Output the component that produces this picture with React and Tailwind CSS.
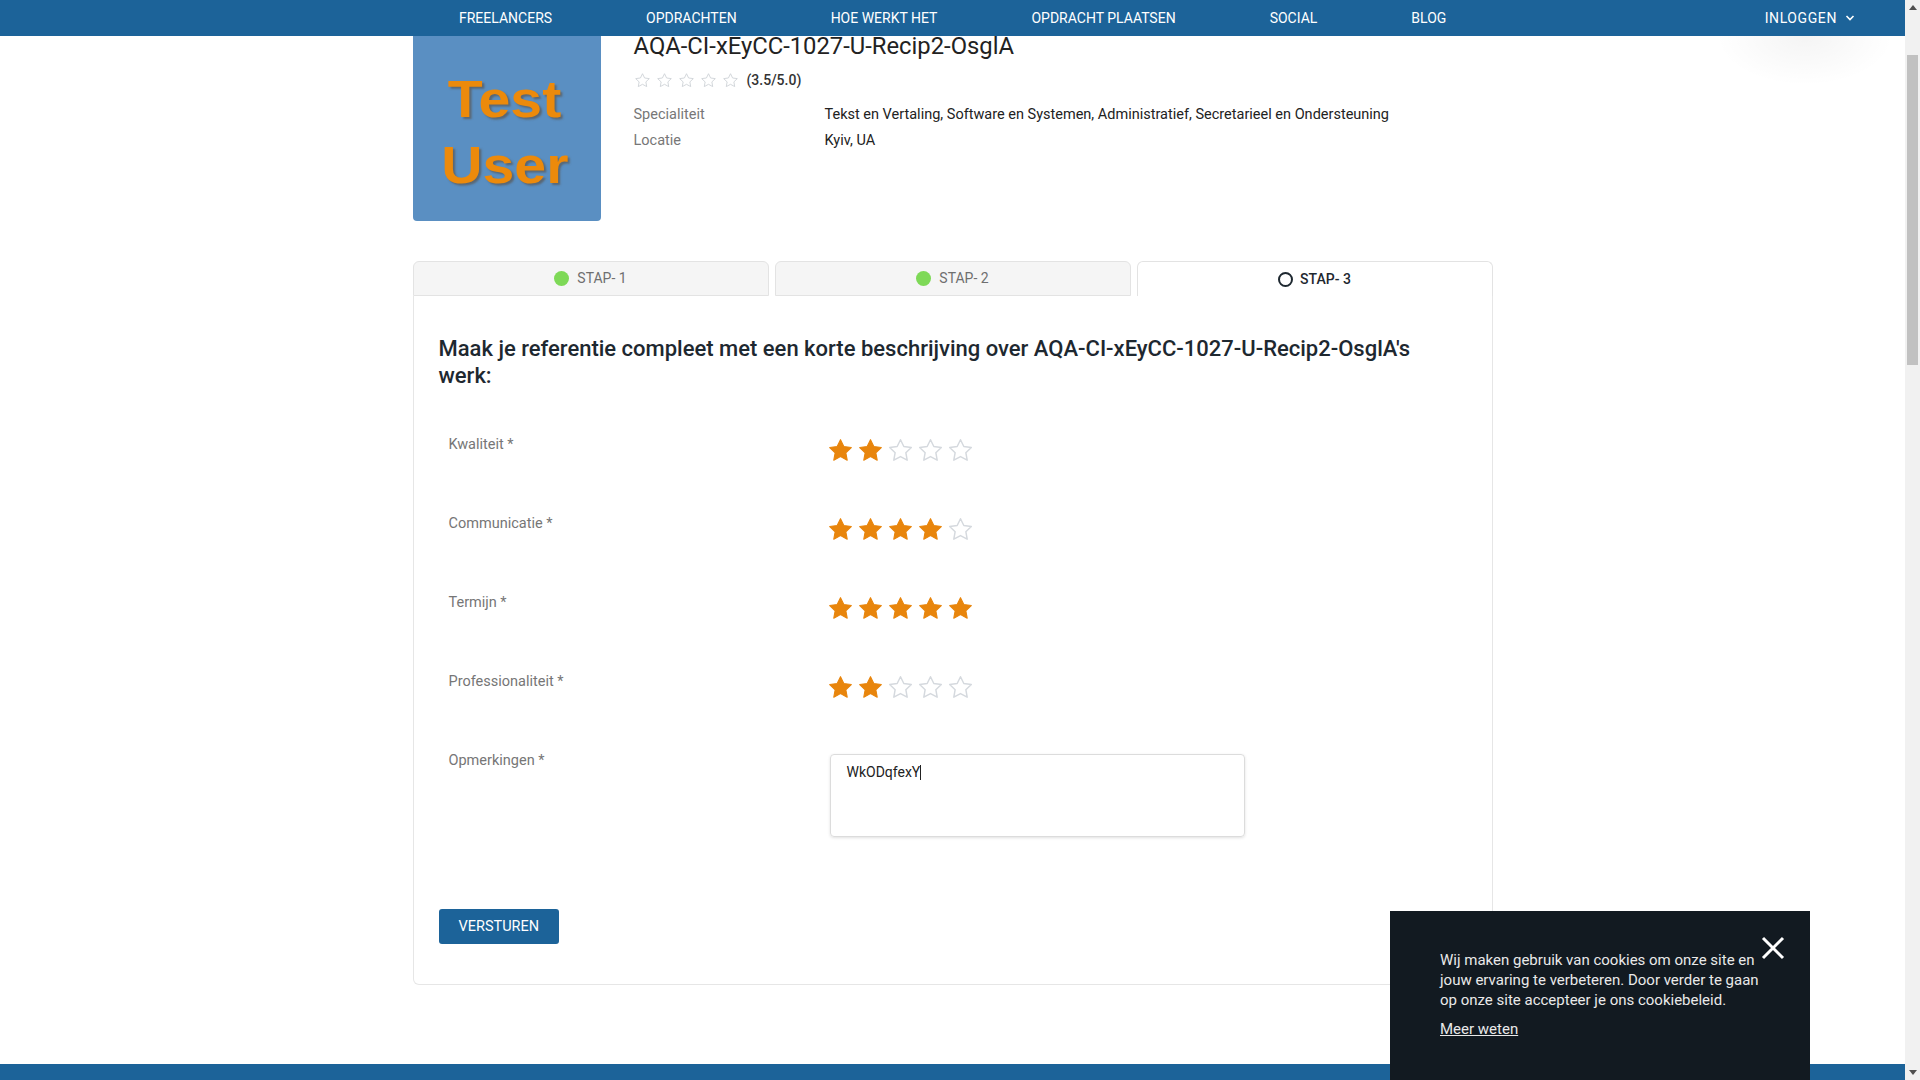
import React from "react";

const STAR_PATH =
  "M12 2.4l2.95 6.05 6.65.9-4.85 4.63 1.2 6.62L12 17.4l-5.95 3.2 1.2-6.62L2.4 9.35l6.65-.9z";

function Star({ filled, size = 22, stroke = "#d5d9de" }) {
  return (
    <svg width={size} height={size} viewBox="0 0 24 24" className="block shrink-0">
      <path
        d={STAR_PATH}
        fill={filled ? "#e8850c" : "none"}
        stroke={filled ? "#e8850c" : stroke}
        strokeWidth={filled ? 1 : 1.3}
        strokeLinejoin="round"
      />
    </svg>
  );
}

function Stars({ value }) {
  return (
    <div className="flex gap-[3px] ml-[-3px]">
      {[1, 2, 3, 4, 5].map((i) => (
        <Star key={i} filled={i <= value} size={27} />
      ))}
    </div>
  );
}

function RatingRow({ label, value }) {
  return (
    <div className="flex h-[79px]">
      <div className="w-[391px] pl-[10px] text-[14.5px] leading-[20px] text-[#767676]">{label}</div>
      <div className="pt-[1.5px]">
        <Stars value={value} />
      </div>
    </div>
  );
}

export default function App() {
  const navItems = ["FREELANCERS", "OPDRACHTEN", "HOE WERKT HET", "OPDRACHT PLAATSEN", "SOCIAL", "BLOG"];
  return (
    <div className="flex w-[1920px] h-[1080px] overflow-hidden bg-white font-['Roboto','Liberation_Sans',sans-serif]">
      <div className="relative w-[1905px] h-full flex flex-col bg-white">
        {/* nav */}
        <nav className="relative z-10 h-[36px] shrink-0 bg-[#1c6399] flex items-center text-white">
          <div className="ml-[459px] flex gap-[94px] text-[14px] leading-none">
            {navItems.map((n) => (
              <span key={n} className="whitespace-nowrap">{n}</span>
            ))}
          </div>
          <div className="ml-auto mr-[50px] flex items-center gap-[8px] text-[14px] tracking-[0.6px] leading-none">
            <span>INLOGGEN</span>
            <svg width="10" height="8" viewBox="0 0 10 8">
              <path d="M1.5 2l3.5 3.5L8.5 2" fill="none" stroke="white" strokeWidth="1.6" />
            </svg>
          </div>
        </nav>
        <div className="absolute top-[36px] left-[1715px] w-[180px] h-[50px] bg-[radial-gradient(ellipse_at_top,rgba(0,0,0,0.045),transparent_70%)]" />

        {/* header */}
        <div className="w-[1080px] mx-auto shrink-0">
          <div className="flex gap-[33px]">
            <div className="w-[188px] h-[185px] rounded-b-[4px] bg-[#5a8fc2] flex flex-col items-center justify-center font-['Liberation_Sans',Arial,sans-serif] font-bold text-[#ec8a0b] text-[52px] leading-[66px] pt-[6px] pr-[3px] [text-shadow:2px_2px_2px_rgba(90,90,90,0.75)]">
              <span className="scale-x-[1.1]">Test</span>
              <span className="scale-x-[1.1]">User</span>
            </div>
            <div className="flex flex-col">
              <div className="mt-[-4px] text-[23.8px] leading-[28px] text-[#222]">AQA-CI-xEyCC-1027-U-Recip2-OsglA</div>
              <div className="mt-[12px] flex items-center h-[16px]">
                <div className="flex gap-[5px]">
                  {[1, 2, 3, 4, 5].map((i) => (
                    <Star key={i} size={17} stroke="#cfd3d8" />
                  ))}
                </div>
                <span className="ml-[8px] text-[14px] font-medium text-[#333]">(3.5/5.0)</span>
              </div>
              <div className="mt-[14px] flex text-[14.5px] leading-[26px]">
                <div className="w-[191px] text-[#777]">Specialiteit</div>
                <div className="text-[#222]">
                  Tekst en Vertaling, Software en Systemen, Administratief, Secretarieel en Ondersteuning
                </div>
              </div>
              <div className="flex text-[14.5px] leading-[26px]">
                <div className="w-[191px] text-[#777]">Locatie</div>
                <div className="text-[#222]">Kyiv, UA</div>
              </div>
            </div>
          </div>

          {/* tabs */}
          <div className="mt-[40px] flex gap-[6px] h-[35px]">
            <div className="flex-1 flex items-center justify-center gap-[8px] bg-[#f5f5f5] border border-[#e3e3e3] rounded-t-[6px] text-[14px] text-[#6f6f6f]">
              <span className="w-[15px] h-[15px] rounded-full bg-[#7ed957]" />
              <span>STAP- 1</span>
            </div>
            <div className="flex-1 flex items-center justify-center gap-[8px] bg-[#f5f5f5] border border-[#e3e3e3] rounded-t-[6px] text-[14px] text-[#6f6f6f]">
              <span className="w-[15px] h-[15px] rounded-full bg-[#7ed957]" />
              <span>STAP- 2</span>
            </div>
            <div className="flex-1 flex items-center justify-center gap-[7px] bg-white border border-b-0 border-[#e3e3e3] rounded-t-[6px] text-[14px] font-medium text-[#1e2830]">
              <span className="w-[15px] h-[15px] rounded-full border-2 border-[#1e2830]" />
              <span>STAP- 3</span>
            </div>
          </div>

          {/* panel */}
          <div className="border-x border-b border-[#e6e6e6] rounded-b-[6px] pl-[25px] pr-[24px] pt-[39px] pb-[40px]">
            <h2 className="text-[22px] leading-[27px] font-medium text-[#1e2830]">
              Maak je referentie compleet met een korte beschrijving over AQA-CI-xEyCC-1027-U-Recip2-OsglA's werk:
            </h2>
            <div className="mt-[46px]">
              <RatingRow label="Kwaliteit *" value={2} />
              <RatingRow label="Communicatie *" value={4} />
              <RatingRow label="Termijn *" value={5} />
              <RatingRow label="Professionaliteit *" value={2} />
              <div className="flex">
                <div className="w-[391px] pl-[10px] text-[14.5px] leading-[20px] text-[#767676]">Opmerkingen *</div>
                <div className="mt-[3px] w-[415px] h-[83px] border border-[#dcdcdc] rounded-[4px] shadow-[0_1px_3px_rgba(0,0,0,0.12)] px-[16px] pt-[7px] text-[14px] leading-[20px] text-[#222] flex items-start">
                  <span>WkODqfexY</span>
                  <span className="mt-[3px] w-px h-[15px] bg-[#222]" />
                </div>
              </div>
            </div>
            <button className="mt-[72px] h-[35px] px-[20px] rounded-[3px] bg-[#1c6399] text-white text-[14.5px]">
              VERSTUREN
            </button>
          </div>
        </div>

        <div className="flex-1" />
        <div className="h-[16px] shrink-0 bg-[#1c6399]" />

        {/* cookie popup */}
        <div className="absolute left-[1390px] top-[911px] w-[420px] h-[169px] bg-[#121a21] text-[#e9e9e9] pl-[50px] pt-[39px]">
          <p className="text-[15px] leading-[20px] whitespace-nowrap">
            Wij maken gebruik van cookies om onze site en
            <br />
            jouw ervaring te verbeteren. Door verder te gaan
            <br />
            op onze site accepteer je ons cookiebeleid.
          </p>
          <a className="mt-[9px] inline-block text-[15px] leading-[20px] underline">Meer weten</a>
          <svg className="absolute left-[371px] top-[25px]" width="24" height="24" viewBox="0 0 24 24">
            <path d="M2 2L22 22M22 2L2 22" stroke="white" strokeWidth="3" />
          </svg>
        </div>
      </div>

      {/* scrollbar */}
      <div className="w-[15px] h-full bg-[#f1f1f1] flex flex-col items-center">
        <div className="h-[15px] flex items-center justify-center">
          <svg width="8" height="5" viewBox="0 0 8 5"><path d="M0 5L4 0L8 5z" fill="#505050" /></svg>
        </div>
        <div className="mt-[40px] w-[11px] h-[310px] bg-[#c1c1c1]" />
        <div className="flex-1" />
        <div className="h-[15px] flex items-center justify-center">
          <svg width="8" height="5" viewBox="0 0 8 5"><path d="M0 0L4 5L8 0z" fill="#505050" /></svg>
        </div>
      </div>
    </div>
  );
}
